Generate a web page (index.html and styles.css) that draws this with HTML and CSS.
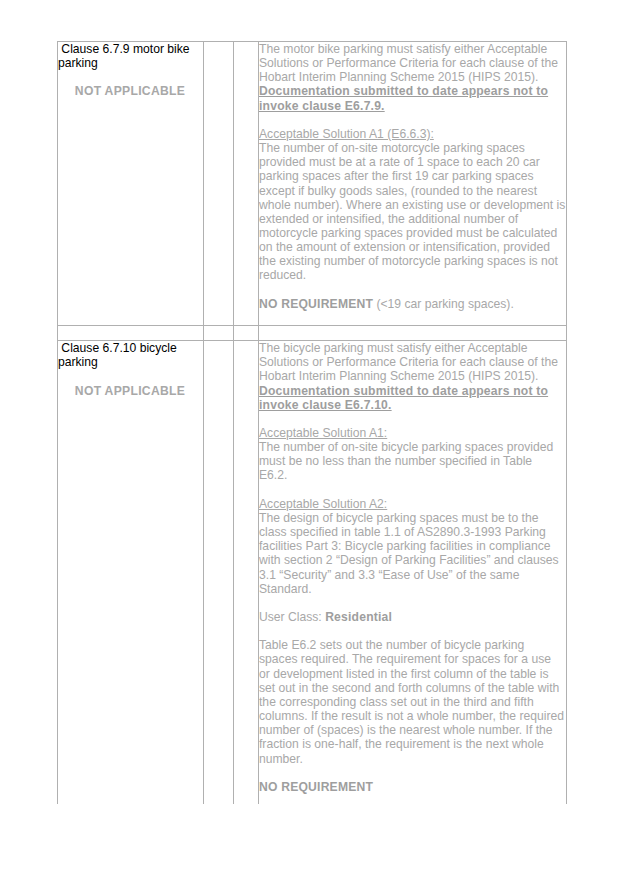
FILE: index.html
```html
<!DOCTYPE html>
<html>
<head>
<meta charset="utf-8">
<link rel="stylesheet" href="styles.css">
</head>
<body>
<table class="report">
  <colgroup>
    <col class="c-clause">
    <col class="c-a">
    <col class="c-b">
    <col class="c-text">
  </colgroup>
  <tr>
    <td class="clause">
      <p class="title">&nbsp;Clause 6.7.9 motor bike parking</p>
      <p class="na">NOT APPLICABLE</p>
    </td>
    <td></td>
    <td></td>
    <td class="text">
      <p>The motor bike parking must satisfy either Acceptable<br>Solutions or Performance Criteria for each clause of the<br>Hobart Interim Planning Scheme 2015 (HIPS 2015).<br><b class="u">Documentation submitted to date appears not to<br>invoke clause E6.7.9.</b></p>
      <p><span class="u">Acceptable Solution A1 (E6.6.3):</span><br>The number of on-site motorcycle parking spaces<br>provided must be at a rate of 1 space to each 20 car<br>parking spaces after the first 19 car parking spaces<br>except if bulky goods sales, (rounded to the nearest<br>whole number). Where an existing use or development is<br>extended or intensified, the additional number of<br>motorcycle parking spaces provided must be calculated<br>on the amount of extension or intensification, provided<br>the existing number of motorcycle parking spaces is not<br>reduced.</p>
      <p><b>NO REQUIREMENT</b> (&lt;19 car parking spaces).</p>
    </td>
  </tr>
  <tr class="spacer">
    <td></td>
    <td></td>
    <td></td>
    <td></td>
  </tr>
  <tr class="last">
    <td class="clause">
      <p class="title">&nbsp;Clause 6.7.10 bicycle parking</p>
      <p class="na">NOT APPLICABLE</p>
    </td>
    <td></td>
    <td></td>
    <td class="text">
      <p>The bicycle parking must satisfy either Acceptable<br>Solutions or Performance Criteria for each clause of the<br>Hobart Interim Planning Scheme 2015 (HIPS 2015).<br><b class="u">Documentation submitted to date appears not to<br>invoke clause E6.7.10.</b></p>
      <p><span class="u">Acceptable Solution A1:</span><br>The number of on-site bicycle parking spaces provided<br>must be no less than the number specified in Table<br>E6.2.</p>
      <p><span class="u">Acceptable Solution A2:</span><br>The design of bicycle parking spaces must be to the<br>class specified in table 1.1 of AS2890.3-1993 Parking<br>facilities Part 3: Bicycle parking facilities in compliance<br>with section 2 “Design of Parking Facilities” and clauses<br>3.1 “Security” and 3.3 “Ease of Use” of the same<br>Standard.</p>
      <p>User Class: <b>Residential</b></p>
      <p>Table E6.2 sets out the number of bicycle parking<br>spaces required. The requirement for spaces for a use<br>or development listed in the first column of the table is<br>set out in the second and forth columns of the table with<br>the corresponding class set out in the third and fifth<br>columns. If the result is not a whole number, the required<br>number of (spaces) is the nearest whole number. If the<br>fraction is one-half, the requirement is the next whole<br>number.</p>
      <p><b>NO REQUIREMENT</b></p>
    </td>
  </tr>
</table>
</body>
</html>
```

FILE: styles.css
```css
html, body {
  margin: 0;
  padding: 0;
  background: #ffffff;
}

body {
  font-family: "Liberation Sans", Arial, sans-serif;
  font-size: 12.15px;
  line-height: 14.15px;
  color: #a8a8a8;
  padding: 41px 0 0 57px;
}

.report {
  border-collapse: collapse;
  table-layout: fixed;
  width: 509px;
}

.c-clause { width: 146px; }
.c-a { width: 30px; }
.c-b { width: 25px; }
.c-text { width: 308px; }

.report td {
  border: 1px solid #b0b0b0;
  padding: 0 1px 14.15px 0;
  vertical-align: top;
}

.report p {
  margin: 0;
}

.report p + p {
  margin-top: 14.15px;
}

.text p {
  white-space: nowrap;
}

.clause .title {
  color: #000000;
  padding-right: 4px;
}

.clause .na {
  font-weight: bold;
  text-align: center;
  color: #a8a8a8;
  letter-spacing: 0.3px;
}

.u {
  text-decoration: underline;
}

.text b {
  color: #9e9e9e;
  letter-spacing: 0.2px;
}

.spacer td {
  height: 14px;
  padding: 0;
}

.last td {
  border-bottom: none;
  padding-bottom: 10px;
}
```
